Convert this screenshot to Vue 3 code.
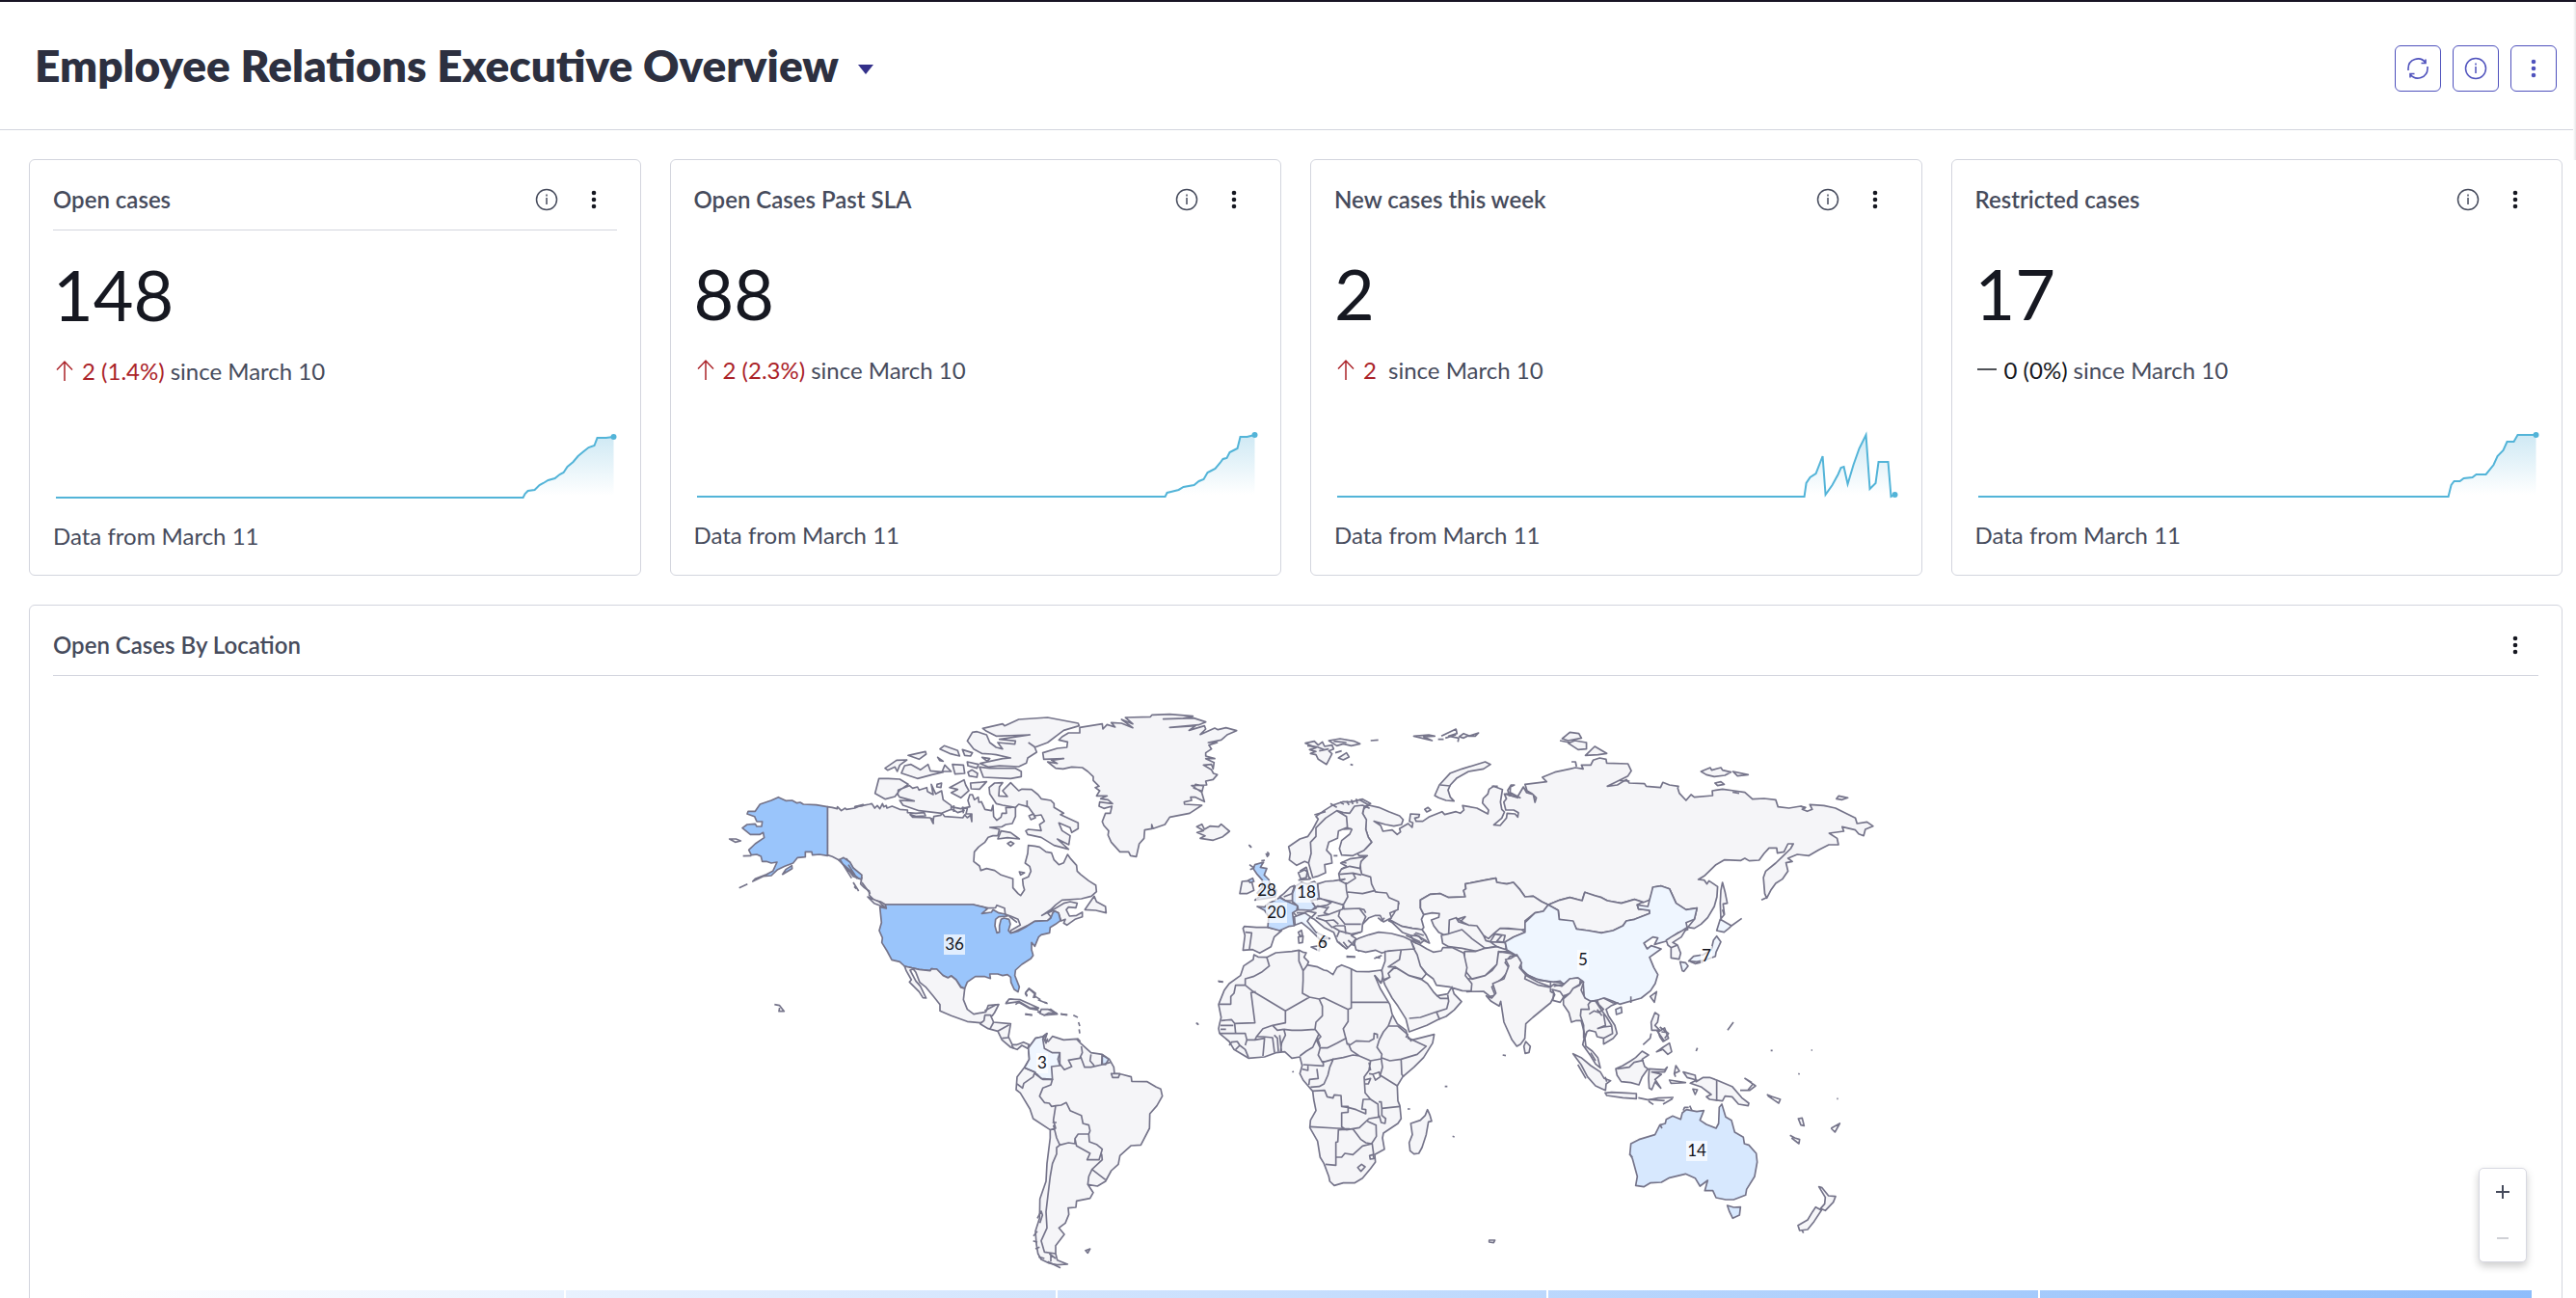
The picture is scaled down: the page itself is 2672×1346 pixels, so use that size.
<script setup>
const metrics = [
  {
    title: 'Open cases', value: '148', trend: 'up', delta: '2 (1.4%)', divider: true,
    line: '3,70 488,70 490,66 493,63 500,62 505,57 509,55 514,52 521,50 526,46 530,44 534,38 540,33 545,27 551,22 556,18 562,16 565,8 574,8 582,7',
    end: [582, 7]
  },
  {
    title: 'Open Cases Past SLA', value: '88', trend: 'up', delta: '2 (2.3%)', divider: false,
    line: '3,70 489,70 491,66 495,65 503,63 508,60 519,58 524,54 529,52 533,45 537,43 541,41 546,35 549,31 553,30 556,24 560,22 564,20 567,8 574,8 582,6',
    end: [582, 6]
  },
  {
    title: 'New cases this week', value: '2', trend: 'up', delta: '2\u00a0', divider: false,
    line: '3,70 488,70 490,56 494,50 500,46 507,28 510,68 517,58 523,47 526,40 529,39 533,57 539,37 545,20 552,6 556,62 562,56 565,34 575,34 578,70 582,68',
    end: [582, 68]
  },
  {
    title: 'Restricted cases', value: '17', trend: 'flat', delta: '0 (0%)', divider: false,
    line: '3,70 491,70 494,58 497,54 503,54 507,51 516,50 520,47 530,47 538,37 542,28 548,22 552,13 559,13 563,6 582,6',
    end: [582, 6]
  }
]

const labels = [
  { n: 36, x: 990, y: 979 }, { n: 28, x: 1314, y: 923 }, { n: 18, x: 1355, y: 925 },
  { n: 20, x: 1324, y: 946 }, { n: 6, x: 1372, y: 977 }, { n: 5, x: 1642, y: 995 },
  { n: 7, x: 1770, y: 991 }, { n: 14, x: 1760, y: 1193 }, { n: 3, x: 1081, y: 1102 }
]

const ticks = [1, 2, 3, 4, 5]

// Each sheet is drawn at three units per map pixel and placed by its transform.
const sheets = [
  {
    name: 'north-america',
    transform: 'translate(720 720) scale(.33333)',
    shapes: [
      { d: 'M415 350L430 352 445 356 446 350 458 362 470 354 474 358 500 354 526 343 500 350 520 347 545 342 553 340 562 354 570 346 578 356 586 340 590 350 598 346 600 354 616 348 640 358 664 360 664 368 690 370 716 368 720 378 690 380 672 374 680 382 735 384 743 400 746 380 768 376 770 368 780 380 836 384 842 375 850 384 860 376 864 396 864 372 846 372 850 356 836 352 840 362 820 368 808 360 790 356 800 350 830 356 858 350 852 330 858 312 866 312 872 328 884 320 886 336 894 334 905 358 925 362 930 345 932 380 942 392 955 382 958 370 972 370 970 352 985 352 1000 348 1000 380 990 402 970 405 958 412 920 414 950 420 945 440 930 440 915 445 905 460 885 475 872 490 870 520 888 534 892 548 910 542 935 548 955 562 992 574 992 602 1008 620 1016 626 1028 608 1024 595 1022 575 1040 568 1048 550 1044 535 1030 525 1038 495 1040 470 1060 472 1075 475 1095 490 1112 493 1120 515 1135 530 1150 524 1162 498 1172 512 1190 532 1192 550 1202 560 1228 580 1250 594 1252 614 1236 628 1205 636 1145 640 1125 655 1112 668 1082 688 1120 668 1150 650 1170 645 1192 650 1188 664 1165 662 1158 670 1168 690 1190 688 1208 678 1208 692 1185 700 1160 718 1150 712 1155 700 1142 705 1134 680 1122 674 1114 690 1100 704 1060 706 1040 718 1015 730 985 745 985 735 1015 718 1008 700 985 690 968 684 966 665 942 656 938 664 915 665 868 654 595 654 580 645 560 640 545 625 545 612 530 602 518 590 522 570 498 545 475 512 450 515 430 505 415 500Z' },
      { cls: 'l5', d: 'M578 662L598 666 595 654 868 654 905 663 912 668 895 682 925 678 930 670 948 680 968 684 975 690 948 692 938 700 936 720 942 742 950 740 950 720 955 700 965 696 980 700 984 715 978 735 985 743 1010 736 1035 722 1060 706 1100 704 1110 696 1116 680 1122 674 1134 680 1140 704 1125 715 1108 725 1106 742 1080 748 1072 755 1060 784 1050 772 1050 794 1055 812 1048 822 1020 840 1000 858 998 875 1012 910 1008 926 996 918 986 896 985 880 975 872 960 875 945 870 920 870 922 884 905 878 875 878 850 895 842 915 830 910 815 888 800 876 790 882 770 872 755 855 738 854 735 860 700 856 655 846 640 832 615 826 600 798 584 772 586 758 576 735 583 710Z' },
      { cls: 'l5', d: 'M415 350L415 502 390 498 368 500 366 490 346 490 346 506 322 508 308 525 282 535 260 545 240 564 215 566 182 582 190 574 225 560 245 550 258 522 240 525 225 520 212 520 208 504 195 498 178 500 170 484 190 465 218 446 215 430 205 436 175 436 150 416 165 405 190 403 195 411 210 411 212 396 195 396 188 380 165 372 168 364 190 364 205 342 240 330 262 320 285 331 305 330 320 338 330 336 340 342 380 344ZM275 560L285 545 304 533 305 542ZM450 516L465 508 485 522 495 540 522 562 520 576 495 566 480 546Z' },
      { d: 'M898 106L960 92 966 98 1010 78 1100 72 1195 90 1198 98 1150 112 1100 150 1060 165 1066 180 1038 198 1034 214 1010 225 950 222 915 226 890 215 960 200 985 198 940 188 925 186 895 184 870 170 850 145 866 118 880 116 910 126 920 150 940 165 960 170 945 150 998 155 1000 145 950 140 1045 126 940 130 910 115Z' },
      { d: 'M888 226L920 230 1000 230 1018 240 1018 256 985 262 900 258ZM575 262L605 262 640 264 666 280 640 298 625 318 595 326 563 308ZM635 298L670 284 680 292 695 288 700 298 724 290 726 302 744 312 738 280 752 310 770 300 775 328 800 346 800 358 770 370 700 362 650 345 640 330 685 332 640 320 634 312ZM795 290L840 266 845 282 855 300 830 322 800 306 820 296ZM860 276L910 272 888 295 862 294ZM920 310L918 290 935 276 960 275 950 288 948 316 975 318 960 300 985 275 1010 300 1020 295 1050 296 1070 312 1080 325 1110 330 1120 340 1120 352 1150 370 1140 374 1195 400 1195 418 1175 430 1170 415 1135 400 1145 424 1170 440 1166 468 1130 450 1165 482 1120 470 1080 445 1038 436 1032 425 1040 420 1080 424 1075 405 1090 395 1080 375 1060 378 1040 350 1010 342 1000 352 960 345 940 340Z' },
      { d: 'M945 450L955 425 985 430 1012 450 975 446ZM645 245L655 222 675 218 704 235 728 218 735 238 775 242 740 250 695 262ZM594 230L630 205 662 204 640 220 632 240 625 226 602 236ZM780 220L800 240 772 240ZM804 218L838 220 842 246 812 248ZM765 170L778 160 820 175 826 192 795 184ZM835 172L866 182 860 192 842 190ZM850 210L885 218 880 230 852 222ZM666 190L720 178 722 186 700 202ZM852 242L865 235 882 246 880 258 856 254ZM756 280L770 276 768 290 755 288ZM975 464L985 458 995 464 985 472ZM1012 552L1028 555 1016 562ZM1042 378L1055 372 1062 384 1048 390ZM758 196L775 208 764 206ZM896 196L920 200 912 208Z' },
      { d: 'M1216 670L1245 628 1252 645 1280 660 1282 680 1250 672ZM540 630L575 645 596 664 560 650ZM655 846L700 856 735 860 738 854 755 855 775 875 790 882 800 876 815 888 830 912 842 916 838 950 850 980 870 995 908 988 915 968 948 965 935 990 928 1000 905 1000 905 1016 890 1022 850 1018 800 1000 765 985 765 965 745 940 720 910 702 896 690 865 682 855 672 858 690 892 704 908 722 945 712 944 700 925 670 895 676 888 660 860Z' },
      { line: true, d: 'M455 516L490 572M462 528L500 560M470 540L515 575M480 530L508 574M495 585L512 612M522 585L548 620M498 598L505 605M140 602L166 590M110 450L130 450 145 456 128 460ZM152 503L178 502M250 965L266 968 280 986 264 986 266 975M970 960L985 948 1020 955 1070 982 1045 978 1010 958 1000 965M1032 928L1042 915 1062 930 1060 945M1032 928L1036 938M1070 950L1100 962M1030 996L1052 998M1070 988L1110 980 1130 995 1090 998ZM1140 994L1160 998M1110 692L1100 680 1120 672M980 690L1005 710M1040 150L1062 165M500 350L526 346M740 384L745 404M808 345L808 366M835 350L838 370M1036 330L1036 352' }
    ]
  },
  {
    name: 'greenland-iceland',
    transform: 'translate(1080 720) scale(.33333)',
    shapes: [
      { d: 'M120 103L190 92 192 108 205 94 230 102 218 88 250 90 285 104 250 78 285 92 262 72 340 70 345 64 400 62 472 68 440 75 380 77 475 74 512 86 490 95 400 103 480 98 460 112 508 98 512 108 495 125 540 105 550 110 575 104 608 113 580 125 560 142 520 150 548 150 522 158 530 170 512 182 512 192 540 200 512 200 538 212 535 232 530 218 505 220 530 235 536 246 548 250 535 265 512 270 515 282 468 284 500 305 505 285 480 280 475 292 498 300 508 334 480 320 465 320 468 330 445 335 446 342 500 345 462 370 400 382 385 405 348 418 344 405 344 418 322 422 320 448 305 465 296 505 278 502 272 490 245 490 218 460 208 438 210 425 195 408 190 396 200 370 215 370 220 348 195 355 180 348 182 335 222 340 208 328 185 325 205 316 172 316 182 300 168 290 180 286 162 268 162 256 145 240 128 228 95 226 68 232 45 230 20 210 50 215 32 205 70 200 8 202 5 182 50 168 80 165 82 148 55 142 65 132 85 120 120 120Z' },
      { d: 'M484 412L500 404 508 420 525 410 552 412 560 404 586 426 565 443 535 454 495 448 510 440 485 430 505 424Z' },
      { line: true, d: 'M698 496L708 500 702 506M704 490L708 502M646 468L654 476' }
    ]
  },
  {
    name: 'asia',
    transform: 'translate(1420 740) scale(.34439 .33333)',
    shapes: [
      { d: 'M0 285L30 292 60 305 92 318 103 330 98 345 75 350 50 345 15 335 35 348 42 366 70 362 85 376 95 368 92 358 118 342 130 354 132 340 122 335 125 312 152 314 150 322 138 325 142 335 162 335 180 322 220 305 228 314 262 305 275 310 286 300 282 286 325 294 358 312 360 300 342 278 344 264 358 250 362 235 375 226 402 236 396 275 400 298 408 306 400 325 376 346 395 348 414 325 416 310 440 312 448 322 450 308 436 300 412 300 406 275 414 265 408 250 432 250 455 262 425 245 426 228 438 222 428 222 418 238 422 255 448 258 465 228 475 246 495 252 500 276 504 262 490 248 476 240 470 220 535 212 522 198 560 182 605 172 622 168 645 172 640 160 668 160 675 145 695 138 714 142 716 154 780 156 790 178 780 194 745 212 718 226 748 222 775 205 784 216 830 218 835 226 878 230 885 214 905 222 932 226 930 232 935 248 955 270 970 252 980 260 1035 255 1034 240 1065 235 1100 240 1132 245 1155 266 1190 264 1225 268 1232 290 1265 294 1300 288 1315 292 1305 298 1320 304 1335 298 1328 283 1370 286 1405 294 1440 312 1465 325 1470 342 1500 337 1518 350 1495 360 1490 380 1475 374 1465 362 1425 352 1430 366 1386 372 1410 388 1414 408 1385 408 1355 424 1325 442 1290 438 1262 450 1275 460 1256 464 1262 490 1245 515 1225 528 1210 550 1198 574 1192 560 1188 510 1195 490 1225 465 1245 445 1270 420 1278 405 1262 405 1250 430 1230 434 1228 418 1205 418 1190 435 1175 456 1145 458 1132 450 1120 457 1070 455 1045 470 1010 505 992 516 1010 518 1018 530 1024 520 1050 538 1048 570 1040 600 1020 635 1000 655 980 668 960 665 980 640 988 605 955 610 925 590 905 545 880 536 855 540 855 552 845 580 825 588 800 578 760 590 718 582 700 572 680 570 650 556 642 582 605 572 575 580 540 595 520 585 495 568 470 570 455 548 435 525 415 530 385 525 382 512 350 518 290 530 292 545 285 550 290 570 240 572 215 560 185 562 155 580 155 605 165 625 158 640 165 665 160 672 130 668 100 662 60 645 75 622 90 590 60 575 35 560 10 550 5 525 -24 500 -26 470 -24 455 -5 442 -29 442 -39 432 -10 420 8 400 -2 385 -10 360 -10 330 -19 310 -15 295Z' },
      { d: 'M540 595L575 580 605 572 642 582 650 556 680 566 700 572 718 582 760 590 800 578 825 586 808 595 812 608 845 612 845 622 800 640 775 645 765 660 735 675 700 682 660 675 625 670 615 652 573 640 570 612ZM540 595L520 585 495 568 470 570 455 548 435 525 415 530 385 525 382 512 350 518 290 530 292 545 285 550 290 570 240 572 215 560 185 562 155 580 155 605 165 625 190 620 212 622 210 634 188 642 195 660 210 680 225 688 240 685 242 642 262 635 285 650 300 658 325 660 345 690 360 700 375 685 395 668 420 668 460 672 475 670 470 645 500 620 525 615ZM218 690L240 685 242 642 262 635 270 648 300 658 325 660 345 690 352 706 365 710 380 685 410 690 405 710 420 715 410 735 385 725 350 730 325 740 280 730 240 725 222 715ZM375 685L395 668 460 672 470 680 435 695 410 712 385 708 400 690ZM365 710L410 712 415 735 400 738 385 725Z' },
      { d: 'M288 740L285 790 290 800 310 826 350 815 370 800 385 780 390 740 438 748 415 735 385 725 350 730 320 740ZM295 825L308 852 295 865 345 864 365 880 380 876 370 850 400 825 425 795 410 775 425 755 440 752 415 740 390 742 385 780 350 815 310 825ZM60 640L100 662 130 668 160 672 172 690 182 714 165 706 155 715 135 705 125 690 100 680Z' },
      { cls: 'l1', d: 'M540 595L570 612 573 640 615 645 625 670 660 675 700 682 735 675 765 660 775 645 800 640 845 622 845 612 812 608 808 595 840 600 845 580 855 540 880 536 905 545 925 590 955 610 988 605 980 640 955 650 960 672 930 682 895 708 860 718 870 698 855 695 828 714 838 732 850 722 880 732 845 758 858 790 870 812 862 840 848 862 820 885 755 904 735 895 710 885 690 892 660 900 648 880 645 835 628 822 605 825 590 840 560 835 515 830 480 815 460 795 455 765 440 750 415 735 410 710 435 695 470 680 470 650 500 620 525 615Z' },
      { d: 'M198 255L212 222 245 185 280 172 350 150 366 158 345 172 300 180 265 200 245 222 238 238 245 260 256 272 232 270 210 262ZM582 78L605 58 632 62 640 76 600 84ZM600 92L620 84 655 90 655 110 630 112ZM652 130L680 102 716 124 690 128ZM1000 180L1028 168 1032 176 1060 168 1065 176 1090 182 1072 192 1040 196 1016 190ZM1096 180L1142 190 1110 194ZM1042 216L1060 212 1070 220 1050 224ZM1408 265L1415 256 1442 262 1425 268ZM168 298L178 292 186 300 174 306ZM272 72L285 62 300 68 285 76Z' },
      { line: true, d: 'M215 222L245 225M240 685L280 672 310 700 350 730M135 70L190 84 165 72 198 70 180 66ZM218 70L262 48 265 62 240 70 270 76 268 88M230 76L262 66M300 70L330 60 320 70ZM208 80L225 80M610 150L622 150 625 165M575 84L605 90M755 208L785 210M370 226L388 226M412 250L450 262M265 640L290 632 275 648M125 690L150 692 160 705M140 682L165 690M1182 580L1198 572M5 84L28 82M1095 244L1115 248M1300 288L1315 294' }
    ]
  },
  {
    name: 'europe',
    transform: 'translate(1250 780) scale(.33333)',
    shapes: [
      { d: 'M515 160L490 146 455 155 430 154 395 166 370 182 345 200 352 208 335 240 320 262 295 270 260 294 265 315 262 335 285 352 310 340 322 345 335 390 350 386 375 375 372 350 395 345 392 320 378 305 385 280 412 268 415 245 440 235 457 240 450 255 425 275 418 300 425 320 460 322 495 305 518 280 508 265 500 240 502 210 490 190 495 170Z' },
      { d: 'M108 440L115 402 135 400 145 402 152 430 130 440ZM290 375L310 366 318 372 315 390 298 395ZM245 440L265 420 278 415 272 440 272 462 250 462 232 450ZM118 548L122 542 160 545 195 545 238 555 215 575 205 605 170 625 148 614 118 616 124 570ZM290 560L300 554 303 570 295 572ZM290 575L305 572 303 592 292 594Z' },
      { d: 'M350 410L375 402 400 400 435 395 420 400 416 378 424 364 440 355 422 345 450 332 500 325 485 340 482 360 488 380 515 388 518 410 530 435 565 438 572 452 602 465 600 490 575 500 580 515 555 528 545 508 530 508 510 515 490 535 488 558 455 570 470 580 460 592 475 605 455 598 440 612 425 600 412 590 400 560 370 545 340 520 330 515 345 500 320 495 285 510 272 496 290 490 345 485 330 462 355 455Z' },
      { cls: 'l4', d: 'M155 350L182 342 172 358 192 362 184 382 198 396 205 420 222 430 218 450 190 455 155 460 175 445 162 438 178 420 178 398 162 380 150 362ZM135 398L148 392 152 402 140 406Z' },
      { cls: 'l3', d: 'M162 480L185 482 195 472 215 462 232 452 250 462 288 478 285 492 272 500 277 540 260 542 232 555 195 545 198 512 185 492Z' },
      { cls: 'l2', d: 'M272 440L280 418 300 405 318 410 340 402 350 412 355 455 330 462 345 485 330 492 290 490 288 478 272 465Z' },
      { cls: 'l1', d: 'M278 512L310 500 328 512 318 526 345 560 388 580 370 580 372 600 350 575 325 550 300 530 280 538ZM330 606L358 602 355 618Z' },
      { d: 'M312 -28L340 -34 352 -22 365 -32 372 -18 395 -22 400 -10 385 -4 395 5 378 38 352 22 345 8 328 4 345 -2 325 -8 345 -14ZM385 -36L420 -42 465 -34 482 -26 455 -20 430 -26 410 -20ZM415 18L440 2 448 15 430 24Z' },
      { line: true, d: 'M318 -20L350 -16 370 -8M355 -4L385 -10M400 -34L440 -30M405 2L425 -4M452 38L460 40M322 345L330 315 328 280 345 262 345 235 375 205 410 182 430 188M410 182L440 200 443 235M430 188L450 190 465 168 490 165 512 175M340 195L375 185M390 160L410 172M420 156L432 162M440 152L448 164M455 148L460 162M470 145L474 160M480 148L510 165M418 380L460 376 486 382M424 364L450 355 484 362M420 400L440 410 468 392 460 376M355 455L392 464 430 475 444 450 440 430 438 405M444 435L490 440 530 430M430 475L428 488 385 505 350 510M330 462L360 455 392 468 380 476 345 482M385 480L370 500 385 505M335 488L350 478 380 485M430 470L432 488 480 486 500 512 490 535M420 490L415 510 435 535 485 535M480 486L495 490 500 500M370 525L400 522 415 535M345 515L375 525 395 545 408 540 435 540M400 545L418 556 455 566 485 560M418 556L410 575M435 540L438 565M125 560L145 562 138 612M280 415L270 440 245 450M285 500L310 500M538 515L550 525 558 515M295 370L315 358 325 395 290 398M320 385L330 395M440 635L468 637M430 590L445 610M445 585L460 598M415 590L430 605M470 612L480 620M190 322L200 314M138 350L152 360 140 365M175 338L186 336M138 290L144 297M455 238L430 240M425 342L440 345M400 322L412 322' }
    ]
  },
  {
    name: 'africa-arabia',
    transform: 'translate(1240 960) scale(.33333)',
    shapes: [
      { d: 'M182 90L195 97 222 98 250 84 300 80 322 76 334 82 345 84 338 98 352 112 348 122 380 128 400 138 410 140 428 152 440 130 455 122 480 132 500 142 540 143 578 138 585 152 578 178 558 155 575 195 590 220 605 245 612 275 628 305 655 325 662 350 675 355 743 338 738 365 710 410 680 440 645 470 628 498 630 545 636 560 640 600 630 615 585 645 582 660 588 695 558 712 560 735 545 755 520 785 495 800 460 800 432 808 418 795 415 780 400 740 388 720 380 670 356 628 358 605 375 575 368 540 365 515 335 480 325 460 332 435 325 408 300 412 278 392 250 395 215 408 165 412 120 385 105 360 75 335 72 320 75 305 80 285 72 245 90 200 105 180 140 155 150 125 180 105Z' },
      { d: 'M722 572L730 590 735 608 725 610 718 650 705 690 695 708 680 710 668 700 665 675 675 650 670 615 700 605 715 590ZM585 172L605 160 600 148 620 128 665 155 705 168 722 180 740 205 752 218 785 212 798 190 805 212 828 236 805 262 780 282 755 292 720 310 665 330 655 290 630 250 612 225 590 185ZM510 38L498 44 495 56 500 75 530 82 560 76 580 85 600 78 640 75 682 72 670 45 650 35 610 24 570 20 540 28ZM590 80L590 110 580 138 585 168 605 160 600 148 622 128 665 155 705 165 718 150 700 125 690 90 680 72 640 75ZM670 45L680 72 690 90 700 125 720 150 740 165 750 185 790 190 830 202 858 203 860 180 840 155 845 130 835 85 800 68 770 68 765 78 740 82 720 72 700 60 688 55Z' },
      { cls: 'water', d: 'M552 462L572 455 575 470 560 480Z' },
      { line: true, d: 'M222 98L230 125 205 145 180 158 155 165 155 185M155 185L125 185 120 210 110 220 110 244 75 244M155 185L180 205 280 265 355 222M188 205L173 208 185 302 122 304 112 292 80 295M322 76L322 110 335 140 335 170 333 210 355 222 385 228M348 122L335 140M385 228L400 224 475 260 485 256 485 133M485 238L600 238M280 265L280 302 240 310M275 322L300 325 330 325 372 322 375 300 395 280 395 250 385 228M475 260L475 298 460 320 468 350 440 365 410 380 388 380 378 358 390 345 372 322M468 350L472 368 482 370 500 358 540 360 555 352 556 335 566 338 566 350M475 365L485 388 510 405 545 420 578 414 580 400 565 378 572 355 585 330 600 312 612 280M600 312L630 312 660 338 655 348 M660 348L718 375 690 400 640 415 605 420 578 410M662 345L672 360M640 415L642 462 648 470M578 412L582 440 575 465 628 498M388 380L382 402 395 425 430 415 460 410 490 402 510 405M275 322L280 340 268 365 265 392M385 335L365 378 345 390 325 405M380 350L388 375M335 432L398 436 398 420M430 412L418 440 412 465 400 492 385 500 358 502M545 420L540 450 525 470 528 520 545 540 522 540 518 570 530 572 530 585 500 572 475 565 455 562 453 528 432 526 428 536 410 532 402 512 365 514M350 435L350 450 332 446M378 445L382 475 355 478 353 495M356 625L440 630 480 632M455 562L475 562 475 580 455 582 455 625 470 635 510 628 540 600 570 595 568 555 545 540M570 548L578 548 580 568 636 562M580 568L580 590 592 600 590 615 578 612 572 590M445 632L443 672 437 674 437 745 405 742M437 720L455 720 465 708 490 712 520 685 550 678 555 715M445 635L490 632 515 665 530 675 548 678 563 655 562 620 535 608M505 752L517 742 528 750 515 764ZM542 715L552 712 556 724 544 726ZM122 304L125 335 155 335 160 355 185 355 190 345 210 320 240 310 255 325 275 322M75 335L125 335M105 372L112 362 130 360 138 372 125 385M138 372L155 385 165 410M155 372L160 355M185 355L215 350 210 405M188 345L210 345 240 348 246 395M245 340L255 350 258 392M262 340L268 392M78 310L118 310M78 322L95 322M540 425L545 450M540 460L552 462M525 480L545 475 538 492 525 492M665 288L700 285 750 268 782 258 788 235 785 215M750 268L760 292M752 218L762 226 785 226M640 75L635 105 600 128 622 128M670 45L688 55M655 30L700 50M680 25L720 48M558 155L578 180M70 172L86 174M470 97L496 97M556 102L580 92M560 98L575 100M776 500L784 500M660 570L668 570M800 655L806 657M302 452L305 456M4 305L9 305' }
    ]
  },
  {
    name: 'south-america',
    transform: 'translate(1000 980) scale(.33333)',
    shapes: [
      { d: 'M200 320L215 300 222 290 245 285 258 275 252 295 262 300 275 284 310 295 350 292 362 305 395 335 430 340 452 355 466 380 468 400 490 402 520 410 522 424 570 425 598 442 612 448 617 470 600 500 578 525 577 570 550 622 520 624 485 655 480 682 458 702 440 735 415 750 385 745 402 770 392 788 350 796 348 816 324 818 326 838 315 865 295 880 312 900 285 935 285 960 290 980 322 993 290 995 265 990 240 978 230 960 225 930 222 890 235 850 236 790 255 735 258 680 268 600 268 575 215 540 205 510 175 460 162 450 165 410 188 380 203 355Z' },
      { cls: 'l1', d: 'M200 320L215 300 222 290 245 285 258 275 245 292 250 322 275 335 298 335 292 355 298 375 272 378 275 418 240 415 220 395 188 382 203 355Z' },
      { cls: 'l2', d: 'M430 342L450 355 440 372 430 370Z' },
      { d: 'M50 245L62 235 65 218 82 218 92 240 145 245 138 285 150 310 165 310 185 302 202 310 198 322 180 312 165 325 145 318 118 295 105 268 75 260ZM458 400L485 400 480 412 462 412ZM130 182L140 168 175 170 232 196 205 196 172 176ZM240 200L262 200 288 212 262 212 250 218 236 212Z' },
      { line: true, d: 'M188 382L220 395 215 410 186 430 182 445 165 432M220 400L245 418 275 418 270 435 245 445 235 470 250 490 265 492 272 502 285 500M285 500L278 545 285 570 268 575M275 552L288 552M285 500L302 498 318 490 330 515 365 530 370 555 388 560 392 578 388 588 355 588 345 602 345 618 325 615 298 622 288 600 278 560M345 602L350 625 392 648 383 668 420 668 430 635 412 620 390 612 388 588M428 650L430 668 398 698 388 720 385 745M398 698L440 730M298 622L288 630 288 650 275 680 268 720 262 770 255 830 258 880 240 920 250 955 285 960M298 335L298 370 312 388 335 378 325 358 360 352 368 335 365 315M362 345L375 380 395 380 430 372 455 365M395 340L392 360 405 375M430 340L428 372M378 950L392 945 385 958ZM190 150L202 136 220 152 215 165M190 150L196 160M222 160L238 170M250 178L258 180M190 214L212 218M302 215L322 217M340 218L354 225M356 240L360 252M358 262L360 275M352 290L362 300M92 240L80 262M105 268L140 248M118 290L138 288M148 312L155 322M228 850L240 828 244 840 236 865M216 905L228 890M215 920L228 925M222 945L235 940M232 970L250 975M260 985L300 1004M270 965L270 985M245 285L255 305 260 290M792 114L806 115M64 205L100 185M722 242L730 248M265 960L285 975' }
    ]
  },
  {
    name: 'south-asia-oceania',
    transform: 'translate(1540 900) scale(.33333)',
    shapes: [
      { d: 'M100 270L115 295 108 310 130 335 165 355 205 370 215 362 240 368 265 345 290 342 305 352 295 365 275 375 265 390 248 405 235 385 210 378 218 395 205 420 190 432 150 465 128 485 125 530 112 548 100 555 85 535 60 480 50 415 45 430 20 415 5 398 22 405 35 390 25 360 60 345 75 305 65 285 80 282ZM128 540L142 555 138 574 126 577 122 555ZM298 348L308 355 300 380 312 405 330 415 350 412 370 405 400 420 415 420 395 428 378 440 385 460 405 490 412 515 400 530 370 548 370 530 350 525 345 510 325 505 318 510 312 530 315 555 335 570 352 590 360 622 345 610 330 585 305 550 312 520 300 475 285 475 270 480 262 450 245 425 245 400 265 390 275 375 296 362Z' },
      { d: 'M615 195L585 212 565 225 570 240 580 248 580 280 605 284 610 265 600 240 585 232 612 215 630 185ZM740 45L748 75 755 110 742 112 746 145 735 158 733 110 735 70ZM535 385L528 418 515 400ZM518 480L530 450 542 458 538 480 530 490 545 505 520 505ZM540 510L560 498 572 530 555 540 545 525ZM535 572L555 558 575 545 582 572 570 580 555 565ZM408 625L430 615 455 600 470 590 490 570 510 582 490 595 498 618 508 625 490 650 480 675 455 668 425 665 412 645ZM275 578L300 590 330 615 360 635 372 655 392 662 378 672 376 692 345 678 320 650 300 612ZM375 700L395 698 440 700 472 702 472 718 430 715 380 708ZM512 625L560 628 568 620 560 635 520 635 550 642 530 658 548 685 530 666 520 690 512 685 510 655ZM618 635L655 645 658 665 680 652 700 652 722 660 770 680 800 715 822 732 820 740 790 735 770 712 748 710 740 725 700 720 690 712 705 705 675 682 640 670 660 660 630 652ZM1040 992L1050 995 1070 1020 1092 1022 1085 1040 1060 1066 1045 1060 1058 1045 1060 1025ZM1030 1055L1048 1065 1025 1100 1005 1125 980 1128 975 1112 1005 1095 1020 1070ZM976 780L988 778 994 802 984 800Z' },
      { cls: 'l1', d: 'M733 160L768 180 760 188 745 200 722 195ZM722 212L735 230 720 262 718 275 690 285 660 292 635 290 650 275 680 270 705 255 712 225ZM608 292L625 295 633 305 620 322 615 320ZM408 440L425 433 427 450 410 456Z' },
      { cls: 'l2', d: 'M455 858L480 845 530 830 545 800 562 795 565 782 585 772 610 782 615 762 628 752 660 758 682 755 670 785 690 798 720 810 728 795 730 745 738 735 750 775 768 785 778 822 805 838 808 858 822 862 845 888 848 915 840 960 815 1000 812 1018 775 1032 750 1032 720 1026 710 1004 685 1004 694 972 670 990 655 965 625 952 575 964 550 978 515 980 495 992 470 988 475 960 460 905 452 890ZM755 1050L775 1056 796 1055 793 1080 772 1090 762 1070Z' },
      { line: true, d: 'M128 330L160 345 205 355 205 372 165 364 125 345ZM215 355L235 352 245 362 215 368M205 375L205 385 215 390 212 412 235 418 250 395M330 415L322 425 325 440 300 440 298 460 308 490 308 530M330 415L350 412 355 425 370 440 355 450 340 445 325 455M345 415L365 445 380 465 395 490 398 515 370 530M370 455L376 490 350 500M350 440L365 460M350 500L370 495 395 492M768 180L800 157M640 292L655 298 680 292M455 420L455 400M493 550L515 530 518 515M545 495L572 515 560 530M535 505L560 540M550 510L570 512M412 625L450 620 465 605 495 598M722 660L722 725M478 715L510 722 540 716 588 714M510 726L525 736M555 735L585 718M500 720L560 724M590 640L595 615 606 632 590 640 594 650M575 660L625 668 580 670ZM648 688L662 690 655 705ZM795 692L825 692 843 678 810 655 832 668M820 690L835 672M878 705L895 712 920 720 915 732 900 722 880 708M950 832L965 840 980 845 978 858 955 840M1078 810L1105 795 1090 822 1078 810M756 505L774 480M658 570L662 560M890 568L896 568M1016 567L1020 567M976 640L980 642M1096 718L1100 718M14 1158L32 1158 28 1166 14 1164ZM618 755L622 745 635 745M638 740L645 755M450 890L460 900M545 798L552 810M375 650L380 665M290 612L315 655M56 582L66 584M580 248L600 240M740 130L745 145M988 1128L992 1136M330 575L345 600' }
    ]
  }
]
</script>

<template>
  <main class="page">
    <header class="topbar">
      <div class="heading">
        <h1>Employee Relations Executive Overview</h1>
        <button class="caret" type="button" aria-label="Switch dashboard">
          <svg width="16" height="10" viewBox="0 0 16 10"><path d="M0 0H16L8 10Z" /></svg>
        </button>
      </div>
      <div class="actions">
        <button type="button" aria-label="Refresh">
          <svg width="24" height="24" viewBox="0 0 24 24" fill="none" stroke="currentColor" stroke-width="1.6">
            <path d="M2 14V12A10 10 0 0 1 20 6M20 2.500V6.500H15.500M22 10V12A10 10 0 0 1 4 18M4 21.500V17.500H8.500" />
          </svg>
        </button>
        <button type="button" aria-label="Information">
          <svg width="24" height="24" viewBox="0 0 24 24" fill="none" stroke="currentColor" stroke-width="1.500">
            <circle cx="12" cy="12" r="10.500" /><path d="M12 10V17M12 6.500V8.500" />
          </svg>
        </button>
        <button type="button" aria-label="More options">
          <svg width="24" height="24" viewBox="0 0 24 24" fill="currentColor">
            <circle cx="12" cy="5" r="2.300" /><circle cx="12" cy="12" r="2.300" /><circle cx="12" cy="19" r="2.300" />
          </svg>
        </button>
      </div>
    </header>

    <div class="board">
      <section class="metrics">
        <article v-for="(m, i) in metrics" :key="m.title" class="card metric">
          <div class="card-head" :class="{ ruled: m.divider }">
            <h2>{{ m.title }}</h2>
            <div class="tools">
              <button type="button" :aria-label="'About ' + m.title">
                <svg width="24" height="24" viewBox="0 0 24 24" fill="none" stroke="currentColor" stroke-width="1.500">
                  <circle cx="12" cy="12" r="10.500" /><path d="M12 10V17M12 6.500V8.500" />
                </svg>
              </button>
              <button class="dots" type="button" :aria-label="m.title + ' options'">
                <svg width="24" height="24" viewBox="0 0 24 24" fill="currentColor">
                  <circle cx="12" cy="5" r="2.300" /><circle cx="12" cy="12" r="2.300" /><circle cx="12" cy="19" r="2.300" />
                </svg>
              </button>
            </div>
          </div>
          <p class="value">{{ m.value }}</p>
          <p class="change">
            <svg width="24" height="24" viewBox="0 0 24 24" fill="none" stroke-width="1.500" :class="m.trend">
              <path v-if="m.trend === 'up'" d="M12 22V2M4 10.500L12 2L20 10.500" />
              <path v-else d="M2 11H22" />
            </svg>
            <span class="delta" :class="m.trend">{{ m.delta }}</span>
            <span>since March 10</span>
          </p>
          <svg class="spark" viewBox="0 0 585 80">
            <defs>
              <linearGradient :id="'fade' + i" x1="0" y1="6" x2="0" y2="68" gradientUnits="userSpaceOnUse">
                <stop offset="0" stop-color="#cfe9f4" /><stop offset="1" stop-color="#ffffff" />
              </linearGradient>
            </defs>
            <polygon :points="m.line + ' ' + m.end[0] + ',70'" :fill="'url(#fade' + i + ')'" />
            <polyline :points="m.line" fill="none" stroke="#53b4d8" stroke-width="2" />
            <circle :cx="m.end[0]" :cy="m.end[1]" r="3" fill="#53b4d8" />
          </svg>
          <p class="source">Data from March 11</p>
        </article>
      </section>

      <section class="card location">
        <div class="card-head ruled">
          <h2>Open Cases By Location</h2>
          <div class="tools">
            <button class="dots" type="button" aria-label="Open Cases By Location options">
              <svg width="24" height="24" viewBox="0 0 24 24" fill="currentColor">
                <circle cx="12" cy="5" r="2.300" /><circle cx="12" cy="12" r="2.300" /><circle cx="12" cy="19" r="2.300" />
              </svg>
            </button>
          </div>
        </div>
        <div class="map-area">
          <svg class="map" viewBox="719 716 1250 610" role="img" aria-label="World map of open cases">
            <g v-for="s in sheets" :key="s.name" :transform="s.transform">
              <path v-for="(p, k) in s.shapes" :key="k" :d="p.d" :class="p.line ? 'border' : ['land', p.cls]" />
            </g>
            <g v-for="l in labels" :key="l.n">
              <rect class="plate" :x="l.x - (l.n > 9 ? 11 : 6)" :y="l.y - 10" :width="l.n > 9 ? 22 : 12" height="21" />
              <text :x="l.x" :y="l.y + 6">{{ l.n }}</text>
            </g>
          </svg>
          <div class="zoom">
            <button type="button" aria-label="Zoom in">
              <svg width="14" height="14" viewBox="0 0 14 14" stroke="#464b5c" stroke-width="2"><path d="M7 0V14M0 7H14" /></svg>
            </button>
            <button type="button" aria-label="Zoom out" disabled>
              <svg width="14" height="14" viewBox="0 0 14 14" stroke="#d0d1d6" stroke-width="2"><path d="M1 7H13" /></svg>
            </button>
          </div>
        </div>
        <div class="scale"><span v-for="t in ticks" :key="t"></span></div>
      </section>
    </div>
  </main>
</template>

<style>
body { background: #fff; }
</style>

<style scoped>
.page {
  height: 100vh;
  overflow: hidden;
  box-sizing: border-box;
  border-top: 2px solid #181424;
  font-family: Lato, "Liberation Sans", sans-serif;
  font-size: 24px;
  line-height: 30px;
  color: #464b5c;
  background: #fff;
}
h1, h2, p { margin: 0; }
button {
  display: flex;
  align-items: center;
  justify-content: center;
  padding: 0;
  border: 0;
  background: none;
  color: inherit;
  font: inherit;
}
.topbar {
  position: relative;
  display: flex;
  align-items: center;
  justify-content: space-between;
  height: 132px;
  padding: 0 20px 0 36px;
  border-bottom: 1px solid #d3d5de;
}
.topbar::after {
  content: "";
  position: absolute;
  top: 0;
  right: 0;
  width: 3px;
  height: 164px;
  background: linear-gradient(to right, #fff, #e6e6e8);
}
.heading { display: flex; align-items: center; gap: 20px; }
h1 { font-size: 46px; line-height: 56px; font-weight: 800; color: #2d3040; }
.caret { width: 16px; height: 16px; margin-top: 8px; }
.caret path { fill: #33308a; }
.actions { display: flex; gap: 12px; padding-top: 6px; }
.actions button {
  width: 48px;
  height: 48px;
  box-sizing: border-box;
  border: 1px solid #4f52bd;
  border-radius: 6px;
  color: #4f52bd;
}
.board { padding: 30px 14px 0 30px; }
.metrics { display: grid; grid-template-columns: repeat(4, 1fr); gap: 30px; }
.card {
  box-sizing: border-box;
  border: 1px solid #d3d5de;
  border-radius: 6px;
  background: #fff;
}
.metric { display: flex; flex-direction: column; height: 432px; padding: 0 24px; }
.card-head {
  display: flex;
  align-items: center;
  justify-content: space-between;
  height: 72px;
  padding-top: 10px;
  box-sizing: border-box;
}
.card-head.ruled { height: 73px; border-bottom: 1px solid #d3d5de; }
h2 { font-size: 24px; line-height: 30px; font-weight: 600; }
.tools { display: flex; gap: 25px; padding-right: 12px; }
.tools button { width: 24px; height: 24px; }
.tools .dots { color: #161821; }
.value { padding-top: 22px; font-size: 72px; line-height: 88px; color: #161821; }
.change { display: flex; align-items: center; gap: 6px; padding-top: 21px; }
.change svg.up { stroke: #ab2329; }
.change svg.flat { stroke: #161821; }
.delta.up { color: #ab2329; }
.delta.flat { color: #161821; }
.spark { display: block; width: 100%; height: 80px; margin-top: 46px; overflow: visible; }
.source { padding-top: 15px; }
.location { margin-top: 30px; padding: 0 24px 30px; }
.map-area { position: relative; padding: 15px 0 12px; }
.map { display: block; width: 100%; height: 610px; }
.land { fill: #f5f5f8; stroke: #75748a; stroke-width: 5; stroke-linejoin: round; }
.border { fill: none; stroke: #75748a; stroke-width: 5; stroke-linejoin: round; }
.land.l1 { fill: #eff6ff; }
.land.l2 { fill: #d7e8fe; }
.land.l3 { fill: #c3dcfd; }
.land.l4 { fill: #afd2fd; }
.land.l5 { fill: #9ac5fb; }
.land.water { fill: #fff; }
.plate { fill: #fff; fill-opacity: 0.7; }
text { font-size: 17px; text-anchor: middle; fill: #12141c; }
.zoom {
  position: absolute;
  right: 12px;
  bottom: 29px;
  display: flex;
  flex-direction: column;
  box-sizing: border-box;
  border: 1px solid #d8d9e2;
  border-radius: 5px;
  background: #fff;
  box-shadow: 0 4px 8px rgba(0, 0, 0, 0.2);
}
.zoom button { width: 48px; height: 48px; }
.scale {
  display: grid;
  grid-template-columns: repeat(5, 1fr);
  height: 30px;
  margin: 0 7px 0 22px;
  background: linear-gradient(to right, #fff, #8ebdfb);
}
.scale span:not(:last-child) { border-right: 2px solid #fff; }
</style>
